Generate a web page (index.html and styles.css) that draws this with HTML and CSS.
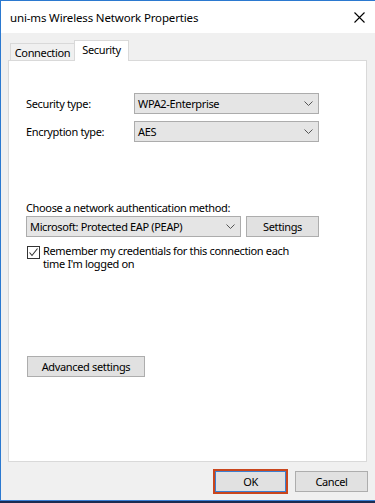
FILE: index.html
```html
<!DOCTYPE html>
<html lang="en">
<head>
    <meta charset="UTF-8">
    <meta name="viewport" content="width=device-width, initial-scale=1.0">
    <title>uni-ms Wireless Network Properties</title>
    <link rel="stylesheet" href="styles.css">
</head>
<body>

<div class="window">
    <div class="titlebar">
        <span class="title">uni-ms Wireless Network Properties</span>
        <svg class="close" width="11" height="11" viewBox="0 0 11 11">
            <path d="M0.5 0.5 L10.5 10.5 M10.5 0.5 L0.5 10.5" stroke="#000" stroke-width="1.1" fill="none"/>
        </svg>
    </div>

    <div class="client">
        <div class="tabs">
            <div class="tab">Connection</div>
            <div class="tab active">Security</div>
        </div>

        <div class="panel">
            <div class="type-grid">
                <span class="label">Security type:</span>
                <div class="combo">
                    <span>WPA2-Enterprise</span>
                    <svg class="chev" width="9" height="5" viewBox="0 0 9 5"><path d="M0.5 0.5 L4.5 4.5 L8.5 0.5" stroke="#555" fill="none"/></svg>
                </div>
                <span class="label">Encryption type:</span>
                <div class="combo">
                    <span>AES</span>
                    <svg class="chev" width="9" height="5" viewBox="0 0 9 5"><path d="M0.5 0.5 L4.5 4.5 L8.5 0.5" stroke="#555" fill="none"/></svg>
                </div>
            </div>

            <div class="auth">
                <div class="auth-label">Choose a network authentication method:</div>
                <div class="auth-row">
                    <div class="combo wide">
                        <span>Microsoft: Protected EAP (PEAP)</span>
                        <svg class="chev" width="9" height="5" viewBox="0 0 9 5"><path d="M0.5 0.5 L4.5 4.5 L8.5 0.5" stroke="#555" fill="none"/></svg>
                    </div>
                    <button class="btn settings">Settings</button>
                </div>
                <div class="check-row">
                    <span class="checkbox">
                        <svg width="11" height="11" viewBox="0 0 11 11"><path d="M1.5 5.5 L4 8.5 L9.5 1.5" stroke="#333" stroke-width="1.1" fill="none"/></svg>
                    </span>
                    <span class="check-text">Remember my credentials for this connection each time I'm logged on</span>
                </div>
            </div>

            <button class="btn advanced">Advanced settings</button>
        </div>

        <div class="footer">
            <span class="ok-wrap"><button class="btn ok">OK</button></span>
            <button class="btn cancel">Cancel</button>
        </div>
    </div>
</div>

</body>
</html>
```

FILE: styles.css
```css
/* Dialog frame */
body {
    margin: 0;
    padding: 0;
    height: 503px;
    background-color: #1b2c52;
    font-family: "Noto Sans", "DejaVu Sans", sans-serif;
    font-size: 11px;
    letter-spacing: -0.35px;
    color: #000;
}
.window {
    width: 375px;
    height: 501px;
    box-sizing: border-box;
    border-top: 1px solid #2b79d0;
    border-left: 1px solid #2b79d0;
    border-bottom: 1px solid #3a7fd4;
    display: flex;
    flex-direction: column;
    background-color: #f0f0f0;
}
.titlebar {
    height: 32px;
    flex: none;
    background: white;
    display: flex;
    align-items: center;
    justify-content: space-between;
    padding: 0 10px 0 9px;
}
.title {
    font-size: 11.5px;
    letter-spacing: -0.15px;
    line-height: 14px;
    padding-top: 1px;
}
.close {
    display: block;
    margin-top: 1px;
}

/* Body of the dialog */
.client {
    flex: 1;
    padding-top: 7px;
}
.tabs {
    display: flex;
    align-items: flex-end;
    padding-left: 9px;
    height: 20px;
}
.tab {
    box-sizing: border-box;
    height: 17px;
    width: 65px;
    border: 1px solid #d9d9d9;
    border-bottom: none;
    background-color: #f0f0f0;
    text-align: center;
    line-height: 17px;
}
.tab.active {
    position: relative;
    z-index: 1;
    height: 21px;
    width: 55px;
    margin-left: -1px;
    margin-bottom: -1px;
    background: white;
    line-height: 18px;
}
.panel {
    box-sizing: border-box;
    height: 402px;
    margin: 0 8px 0 7px;
    background: white;
    border: 1px solid #d9d9d9;
    padding: 32px 0 0 17px;
}

/* Controls */
.type-grid {
    display: grid;
    grid-template-columns: 108px 185px;
    grid-auto-rows: 21px;
    row-gap: 7px;
    align-items: center;
}
.combo {
    box-sizing: border-box;
    height: 21px;
    background-color: #e5e5e5;
    border: 1px solid #acacac;
    display: flex;
    align-items: center;
    justify-content: space-between;
    padding: 0 5px 0 3px;
    line-height: 19px;
}
.chev {
    display: block;
}
.auth {
    margin-top: 58px;
}
.auth-label {
    line-height: 15px;
}
.auth-row {
    display: flex;
    gap: 5px;
    margin-top: 1px;
}
.combo.wide {
    width: 215px;
}
.btn {
    box-sizing: border-box;
    height: 21px;
    margin: 0;
    padding: 0;
    background-color: #e1e1e1;
    border: 1px solid #adadad;
    font-family: inherit;
    font-size: 11px;
    letter-spacing: -0.35px;
    color: #000;
}
.settings {
    width: 73px;
}
.check-row {
    display: flex;
    align-items: flex-start;
    gap: 3px;
    margin: 8px 0 0 1px;
}
.checkbox {
    box-sizing: border-box;
    width: 13px;
    height: 13px;
    border: 1px solid #333;
    margin-top: 1px;
    flex: none;
}
.checkbox svg {
    display: block;
}
.check-text {
    width: 250px;
    line-height: 12.5px;
}
.advanced {
    display: block;
    width: 118px;
    margin: 86px 0 0 1px;
}

/* Bottom buttons */
.footer {
    display: flex;
    justify-content: flex-end;
    align-items: center;
    padding: 7px 7px 0 0;
}
.ok-wrap {
    box-sizing: border-box;
    width: 75px;
    height: 25px;
    border: 2px solid #c9461d;
}
.ok {
    display: block;
    width: 71px;
    border-color: #3c7fd0;
}
.cancel {
    width: 73px;
    margin-left: 7px;
}
```
